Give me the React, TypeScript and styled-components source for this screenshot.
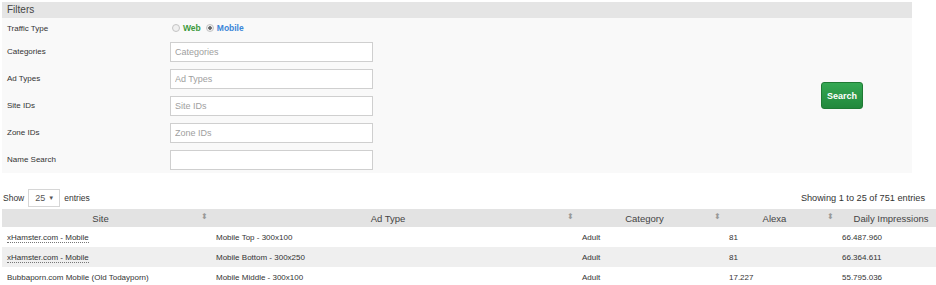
import { Fragment } from "react";
import styled, { createGlobalStyle } from "styled-components";

const Global = createGlobalStyle`
  body {
    margin: 0;
    background: #ffffff;
    font-family: "Liberation Sans", Arial, sans-serif;
    color: #333333;
    overflow: hidden;
  }
`;

const Page = styled.div`
  width: 936px;
  padding-top: 2px;
  overflow: hidden;
`;

const FilterPanel = styled.div`
  width: 910px;
  margin-left: 2px;
  background: #f9f9f9;
`;

const PanelHeader = styled.div`
  height: 16px;
  background: #e5e5e5;
  font-size: 10px;
  line-height: 16px;
  padding-left: 5px;
  color: #444;
`;

const PanelBody = styled.div`
  display: flex;
  align-items: center;
`;

const Form = styled.div`
  flex: 1;
  display: grid;
  grid-template-columns: 168px 203px;
  grid-template-rows: 20px repeat(5, 27px);
  align-items: center;
`;

const Label = styled.div`
  font-size: 8px;
  padding-left: 5px;
  color: #333;
`;

const Radios = styled.div`
  display: flex;
  align-items: center;
  gap: 3px;
  font-size: 8.5px;
  font-weight: bold;
  padding-left: 2px;
`;

const Radio = styled.span<{ $on?: boolean }>`
  width: 6px;
  height: 6px;
  border-radius: 50%;
  border: 1px solid #c4c4c4;
  background: ${(p) => (p.$on ? "radial-gradient(circle, #666 35%, #eee 50%)" : "#f0f0f0")};
  display: inline-block;
`;

const RadioText = styled.span<{ $color: string }>`
  color: ${(p) => p.$color};
  margin-right: 2px;
`;

const Input = styled.input`
  box-sizing: border-box;
  width: 203px;
  height: 20px;
  border: 1px solid #cfcfcf;
  background: #fff;
  font-family: "Liberation Sans", Arial, sans-serif;
  font-size: 9px;
  padding: 0 4px;
  outline: none;
  &::placeholder {
    color: #a0a0a0;
  }
`;

const SearchArea = styled.div`
  width: 91px;
`;

const SearchButton = styled.button`
  width: 42px;
  height: 27px;
  border: 1px solid #1f7a34;
  border-radius: 3px;
  background: linear-gradient(#34a853, #22883c);
  color: #fff;
  font-family: "Liberation Sans", Arial, sans-serif;
  font-size: 9px;
  font-weight: bold;
  padding: 0;
`;

const TableBar = styled.div`
  display: flex;
  justify-content: space-between;
  align-items: center;
  height: 18px;
  margin-top: 16px;
  padding: 0 11px 0 3px;
  font-size: 8.5px;
  color: #333;
`;

const Info = styled.div`
  font-size: 9.2px;
`;

const Length = styled.div`
  display: flex;
  align-items: center;
  gap: 4px;
`;

const Select = styled.span`
  box-sizing: border-box;
  width: 32px;
  height: 18px;
  border: 1px solid #d6d6d6;
  background: #fff;
  display: inline-flex;
  align-items: center;
  justify-content: space-between;
  padding: 0 5px 0 6px;
  font-size: 9px;
  color: #555;
`;

const Arrow = styled.span`
  font-size: 6px;
`;

const Table = styled.table`
  width: 955px;
  margin: 2px 0 0 2px;
  border-collapse: collapse;
  table-layout: fixed;
  font-size: 8px;
  color: #333;
`;

const Th = styled.th<{ $w: number }>`
  box-sizing: border-box;
  width: ${(p) => p.$w}px;
  height: 18px;
  padding: 0 12px 0 0;
  background: #e3e3e3;
  font-weight: normal;
  font-size: 9.5px;
  color: #444;
  position: relative;
  text-align: center;
  white-space: nowrap;
`;

const SortIcon = styled.span`
  position: absolute;
  right: 3px;
  top: 4px;
  font-size: 8px;
  color: #999;
  line-height: 1;
`;

const Tr = styled.tr<{ $alt?: boolean }>`
  height: 20px;
  background: ${(p) => (p.$alt ? "#efefef" : "#ffffff")};
`;

const Td = styled.td`
  padding: 0 5px;
  white-space: nowrap;
  overflow: hidden;
`;

const SiteLink = styled.span<{ $dotted?: boolean }>`
  color: #333;
  ${(p) => (p.$dotted ? "border-bottom: 1px dotted #777;" : "")}
`;

const columns = [
  { name: "Site", w: 209 },
  { name: "Ad Type", w: 366 },
  { name: "Category", w: 147 },
  { name: "Alexa", w: 113 },
  { name: "Daily Impressions", w: 120 },
];

const rows = [
  { site: "xHamster.com - Mobile", dotted: true, ad: "Mobile Top - 300x100", cat: "Adult", alexa: "81", imp: "66.487.960" },
  { site: "xHamster.com - Mobile", dotted: true, ad: "Mobile Bottom - 300x250", cat: "Adult", alexa: "81", imp: "66.364.611" },
  { site: "Bubbaporn.com Mobile (Old Todayporn)", dotted: false, ad: "Mobile Middle - 300x100", cat: "Adult", alexa: "17.227", imp: "55.795.036" },
];

const fields = ["Categories", "Ad Types", "Site IDs", "Zone IDs"];

export default function App() {
  return (
    <Page>
      <Global />
      <FilterPanel>
        <PanelHeader>Filters</PanelHeader>
        <PanelBody>
          <Form>
            <Label>Traffic Type</Label>
            <Radios>
              <Radio />
              <RadioText $color="#3c9a3c">Web</RadioText>
              <Radio $on />
              <RadioText $color="#3b86d8">Mobile</RadioText>
            </Radios>
            {fields.map((f) => (
              <Fragment key={f}>
                <Label>{f}</Label>
                <Input placeholder={f} />
              </Fragment>
            ))}
            <Label>Name Search</Label>
            <Input />
          </Form>
          <SearchArea>
            <SearchButton>Search</SearchButton>
          </SearchArea>
        </PanelBody>
      </FilterPanel>
      <TableBar>
        <Length>
          Show
          <Select>
            25 <Arrow>▼</Arrow>
          </Select>
          entries
        </Length>
        <Info>Showing 1 to 25 of 751 entries</Info>
      </TableBar>
      <Table>
        <thead>
          <tr>
            {columns.map((c, i) => (
              <Th key={c.name} $w={c.w}>
                {c.name}
                {i < columns.length - 1 && <SortIcon>⬍</SortIcon>}
              </Th>
            ))}
          </tr>
        </thead>
        <tbody>
          {rows.map((r, i) => (
            <Tr key={i} $alt={i === 1}>
              <Td>
                <SiteLink $dotted={r.dotted}>{r.site}</SiteLink>
              </Td>
              <Td>{r.ad}</Td>
              <Td>{r.cat}</Td>
              <Td>{r.alexa}</Td>
              <Td>{r.imp}</Td>
            </Tr>
          ))}
        </tbody>
      </Table>
    </Page>
  );
}
